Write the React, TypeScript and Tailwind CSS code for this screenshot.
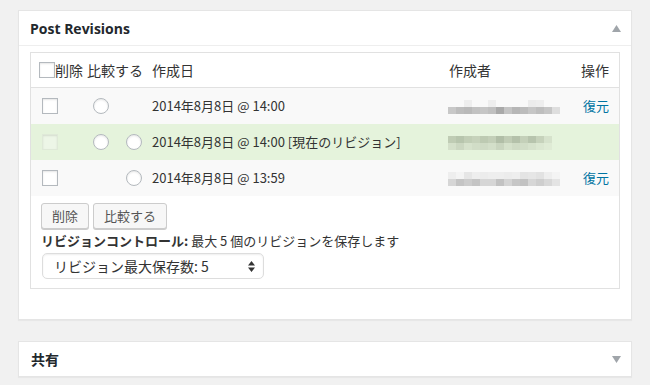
import React from 'react';

const font = "font-['Open_Sans','Noto_Sans_CJK_JP',sans-serif]";

// pixelated author names (blurred in the screenshot)
const blurRows: Record<string, string[][]> = {
  a: [
    ['#f9f9f9', '#f9f9f9', '#eeeeee', '#f9f9f9', '#f9f9f9', '#eeeeee', '#f9f9f9', '#f9f9f9', '#f9f9f9', '#f9f9f9', '#ececec', '#eeeeee', '#f9f9f9', '#f9f9f9'],
    ['#c8c8c8', '#bdbdbd', '#b9b9b9', '#c2c2c2', '#c6c6c6', '#c0c0c0', '#a9a9a9', '#c4c4c4', '#b6b6b6', '#bcbcbc', '#c6c6c6', '#bebebe', '#c6c6c6', '#dedede'],
  ],
  b: [
    ['#bfccb4', '#b7c5ad', '#c1ceb6', '#c6d2bb', '#bdcab2', '#c3cfb8', '#b1bea7', '#c0ccb5', '#b4c1aa', '#c4d0b9', '#b7c4ad', '#c6d2bb', '#d6e2cc', '#e5f3dc'],
    ['#d4e0ca', '#cbd7c1', '#d6e2cc', '#d1ddc7', '#cfdbc5', '#d3dfc9', '#c9d5bf', '#d5e1cb', '#cfdbc5', '#d1ddc7', '#d6e2cc', '#dbe7d1', '#dfebd5', '#e5f3dc'],
  ],
  c: [
    ['#eeeeee', '#f4f4f4', '#e6e6e6', '#eeeeee', '#ececec', '#eeeeee', '#eeeeee', '#ececec', '#eeeeee', '#e4e4e4', '#e6e6e6', '#e2e2e2', '#eeeeee', '#f4f4f4'],
    ['#d6d6d6', '#c4c4c4', '#cccccc', '#c4c4c4', '#d6d6d6', '#d6d6d6', '#c2c2c2', '#d4d4d4', '#c6c6c6', '#c2c2c2', '#d6d6d6', '#cecece', '#d8d8d8', '#e4e4e4'],
  ],
};

function BlurName({ variant }: { variant: string }) {
  return (
    <div className="flex flex-col">
      {blurRows[variant].map((row, i) => (
        <div key={i} className="flex">
          {row.map((c, j) => (
            <div key={j} className="w-[8px] h-[7px]" style={{ backgroundColor: c }} />
          ))}
        </div>
      ))}
    </div>
  );
}

function Checkbox({ faded = false }: { faded?: boolean }) {
  return (
    <span
      className={`inline-block w-[16px] h-[16px] border ${
        faded ? 'border-[#dfe9d8] bg-[#edf6e7]' : 'border-[#b4b9be] bg-white'
      } shadow-[inset_0_1px_2px_rgba(0,0,0,0.1)]`}
    />
  );
}

function Radio() {
  return (
    <span className="inline-block w-[16px] h-[16px] rounded-full border border-[#b4b9be] bg-white shadow-[inset_0_1px_2px_rgba(0,0,0,0.1)]" />
  );
}

function Triangle({ down = false }: { down?: boolean }) {
  return (
    <svg width="9" height="7" viewBox="0 0 9 7">
      <path d={down ? 'M0 0 L9 0 L4.5 7 Z' : 'M4.5 0 L9 7 L0 7 Z'} fill="#a0a5aa" />
    </svg>
  );
}

interface Revision {
  date: string;
  current?: boolean;
  radio1: boolean;
  radio2: boolean;
  blur: string;
}

const revisions: Revision[] = [
  { date: '2014年8月8日 @ 14:00', radio1: true, radio2: false, blur: 'a' },
  { date: '2014年8月8日 @ 14:00 [現在のリビジョン]', current: true, radio1: true, radio2: true, blur: 'b' },
  { date: '2014年8月8日 @ 13:59', radio1: false, radio2: true, blur: 'c' },
];

export default function App() {
  return (
    <div className={`min-h-[385px] w-[650px] bg-[#f1f1f1] pt-[10px] pl-[18px] text-[#444] ${font}`}>
      {/* Post Revisions box */}
      <div className="w-[614px] bg-white border border-[#e5e5e5] shadow-[0_1px_1px_rgba(0,0,0,0.04)]">
        <div className="h-[35px] border-b border-[#eeeeee] flex items-center justify-between pl-[11px] pr-[10px]">
          <h2 className="text-[14px] font-bold text-[#23282d]">Post Revisions</h2>
          <Triangle />
        </div>

        <div className="px-[11px] pt-[6px] pb-[30px]">
          <div className="border border-[#e1e1e1] text-[13px] text-[#333] font-['Noto_Sans_CJK_JP',sans-serif]">
            {/* header row */}
            <div className="h-[35px] flex items-center border-b border-[#e1e1e1] text-[14px]">
              <div className="w-[121px] flex items-center pl-[8px]">
                <Checkbox />
                <span>削除</span>
                <span className="ml-[4px]">比較する</span>
              </div>
              <div className="w-[297px]">作成日</div>
              <div className="w-[132px]">作成者</div>
              <div>操作</div>
            </div>

            {revisions.map((r, i) => (
              <div
                key={i}
                className={`h-[36px] flex items-center ${r.current ? 'bg-[#e5f3dc]' : 'bg-[#f9f9f9]'}`}
              >
                <div className="w-[52px] pl-[11px] flex items-center">
                  <Checkbox faded={r.current} />
                </div>
                <div className="w-[32px] pl-[10px] flex items-center">
                  {r.radio1 && <Radio />}
                </div>
                <div className="w-[37px] pl-[11px] flex items-center">
                  {r.radio2 && <Radio />}
                </div>
                <div className="w-[296px]">{r.date}</div>
                <div className="w-[135px] pt-[1px]">
                  <BlurName variant={r.blur} />
                </div>
                <div className="text-[#0074a2]">{!r.current && '復元'}</div>
              </div>
            ))}

            {/* actions */}
            <div className="pl-[10px] pt-[7px] pb-[9px]">
              <div className="flex gap-[4px]">
                <button className="h-[26px] px-[10px] text-[13px] text-[#555] bg-[#f7f7f7] border border-[#cccccc] rounded-[3px] shadow-[0_1px_0_#cccccc]">
                  削除
                </button>
                <button className="h-[26px] px-[10px] text-[13px] text-[#555] bg-[#f7f7f7] border border-[#cccccc] rounded-[3px] shadow-[0_1px_0_#cccccc]">
                  比較する
                </button>
              </div>
              <p className="mt-[1px] leading-[22px]">
                <strong className="font-bold">リビジョンコントロール:</strong> 最大 5 個のリビジョンを保存します
              </p>
              <div className="mt-[1px] ml-[1px] w-[222px] h-[26px] border border-[#dddddd] rounded-[5px] bg-white flex items-center justify-between pl-[11px] pr-[8px] shadow-[inset_0_1px_2px_rgba(0,0,0,0.07)]">
                <span className="text-[14px] text-[#333]">リビジョン最大保存数: 5</span>
                <svg width="7" height="11" viewBox="0 0 7 11">
                  <path d="M3.5 0 L7 4.5 L0 4.5 Z M3.5 11 L7 6.5 L0 6.5 Z" fill="#333" />
                </svg>
              </div>
            </div>
          </div>
        </div>
      </div>

      {/* 共有 box */}
      <div className="mt-[21px] w-[614px] bg-white border border-[#e5e5e5] shadow-[0_1px_1px_rgba(0,0,0,0.04)]">
        <div className="h-[34px] flex items-center justify-between pl-[12px] pr-[10px]">
          <h2 className="text-[14px] font-bold text-[#23282d]">共有</h2>
          <Triangle down />
        </div>
      </div>
    </div>
  );
}
